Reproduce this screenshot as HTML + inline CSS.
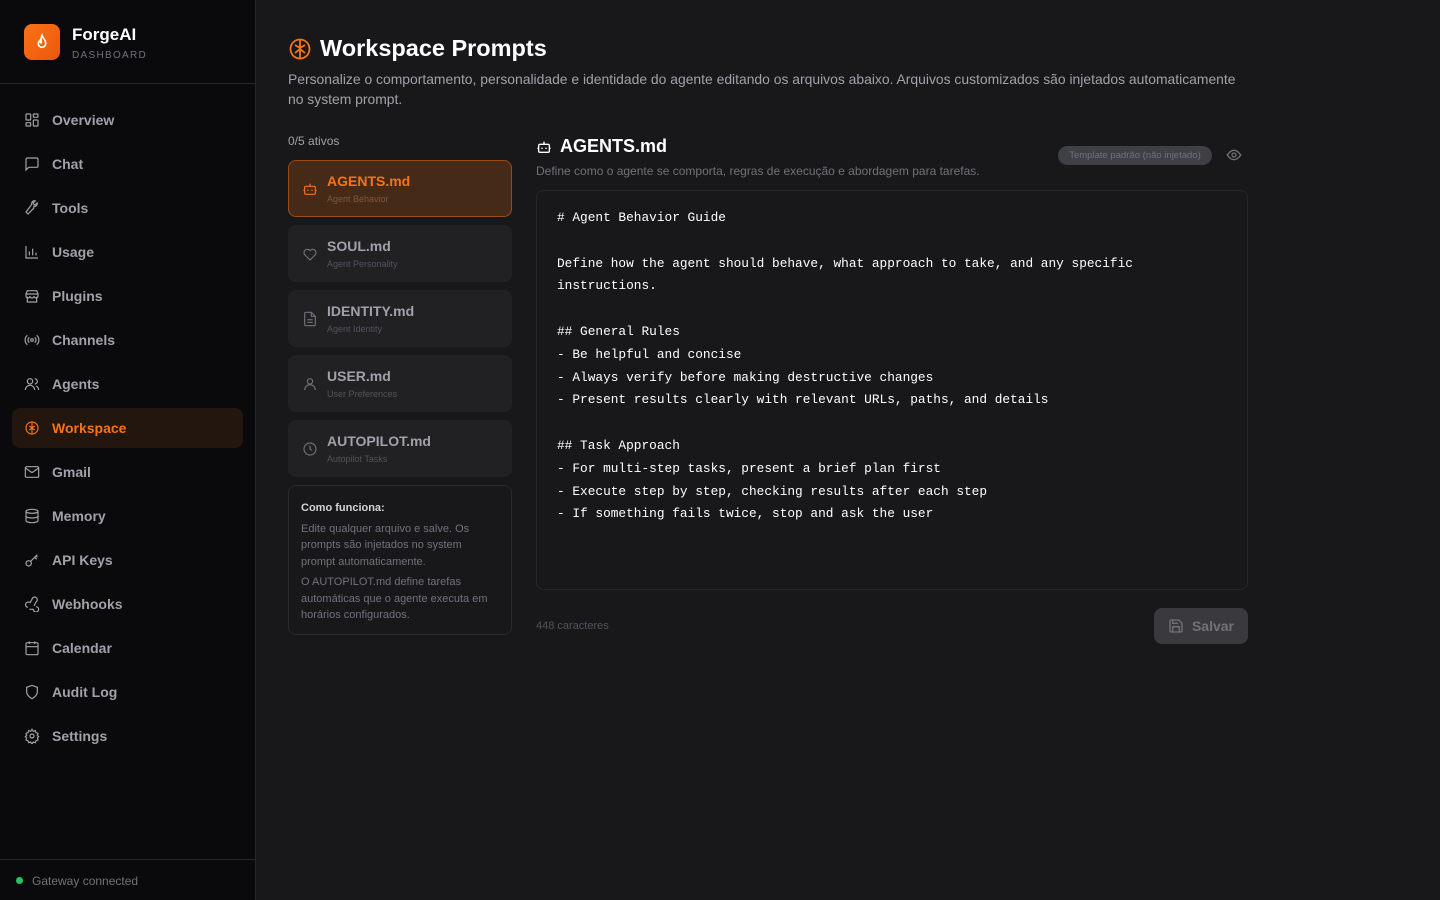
<!DOCTYPE html>
<html><head><meta charset="utf-8"><style>
*{box-sizing:border-box;margin:0;padding:0}
body{width:1440px;height:900px;background:#18181b;font-family:"Liberation Sans",sans-serif;color:#e4e4e7;position:relative;overflow:hidden}
.sb{position:absolute;left:0;top:0;width:256px;height:900px;background:#0a0a0c;border-right:1px solid #27272a}
.logo{position:absolute;left:24px;top:24px;width:36px;height:36px;border-radius:8px;background:linear-gradient(135deg,#f97316,#ea580c);display:flex;align-items:center;justify-content:center}
.brand{position:absolute;left:72px;top:25px;font-weight:bold;font-size:17px;color:#fff}
.sub{position:absolute;left:72px;top:50px;font-size:10px;letter-spacing:1.3px;color:#71717a}
.hr{position:absolute;left:0;top:83px;width:255px;border-top:1px solid #27272a}
.nav{position:absolute;left:12px;width:231px;height:40px;display:flex;align-items:center;padding-left:12px;font-size:14px;font-weight:bold;color:#a1a1aa;border-radius:8px}
.nav svg{width:16px;height:16px;margin-right:12px;stroke:#a1a1aa;fill:none;stroke-width:1.8}
.nav.act{background:#22160e;color:#f97316}
.nav.act svg{stroke:#f97316}
.foot{position:absolute;left:0;top:859px;width:255px;border-top:1px solid #27272a;height:41px;font-size:12px;color:#71717a;padding:14px 0 0 32px}
.foot:before{content:"";position:absolute;left:16px;top:17px;width:7px;height:7px;border-radius:50%;background:#22c55e}
h1{position:absolute;left:320px;top:35px;font-size:23.5px;color:#fff}
.desc{position:absolute;left:288px;top:69px;width:965px;font-size:13.9px;line-height:20px;color:#a1a1aa}
.cnt{position:absolute;left:288px;top:134px;font-size:12px;color:#a1a1aa}
.card{position:absolute;left:288px;width:224px;height:57px;border-radius:8px;background:#212124;border:1px solid #222225}
.card .t{position:absolute;left:38px;top:12px;font-size:14px;font-weight:bold;color:#a1a1aa}
.card .s{position:absolute;left:38px;top:33px;font-size:9px;color:#52525b}
.card svg{position:absolute;left:13px;top:20px;width:16px;height:16px;fill:none;stroke:#71717a;stroke-width:1.7}
.card.act{background:#452a18;border-color:#9a4a17}
.card.act .t{color:#f97316}.card.act svg{stroke:#f97316}.card.act .s{color:#7c5a40}
.info{position:absolute;left:288px;top:485px;width:224px;height:150px;border:1px solid #2a2a2d;border-radius:8px;padding:14px 12px;font-size:11px;color:#71717a;line-height:16.5px}
.info b{color:#d4d4d8;display:block;margin-bottom:4px}
.info p{margin-bottom:4px}
.ta{position:absolute;left:536px;top:190px;width:712px;height:400px;border:1px solid #27272a;border-radius:8px;padding:16px 20px;font-family:"Liberation Mono",monospace;font-size:12.8px;line-height:22.8px;color:#fff;white-space:pre}
.badge{position:absolute;left:1058px;top:146px;width:154px;height:19px;border-radius:10px;background:#3f3f46;font-size:9.5px;color:#71717a;text-align:center;line-height:19px}
.btn{position:absolute;left:1154px;top:608px;width:94px;height:36px;border-radius:8px;background:#3a3a3e;color:#71717a;font-size:14px;font-weight:bold;display:flex;align-items:center;justify-content:center;gap:8px}
</style></head><body>
<div class="sb">
<div class="logo"><svg width="18" height="18" viewBox="0 0 24 24" fill="none" stroke="#fff" stroke-width="2.2" stroke-linecap="round"><path d="M12 3c1 4 5 6 5 11a5 5 0 0 1-10 0c0-2 1-3 2-4 0 2 1 3 2 3 0-4-1-6 1-10z"/></svg></div>
<div class="brand">ForgeAI</div><div class="sub">DASHBOARD</div>
<div class="hr"></div>
<div class="nav" style="top:100px"><svg viewBox="0 0 24 24"><rect x="3" y="3" width="7" height="9" rx="1"/><rect x="14" y="3" width="7" height="5" rx="1"/><rect x="14" y="12" width="7" height="9" rx="1"/><rect x="3" y="16" width="7" height="5" rx="1"/></svg>Overview</div>
<div class="nav" style="top:144px"><svg viewBox="0 0 24 24"><path d="M21 15a2 2 0 0 1-2 2H7l-4 4V5a2 2 0 0 1 2-2h14a2 2 0 0 1 2 2z"/></svg>Chat</div>
<div class="nav" style="top:188px"><svg viewBox="0 0 24 24"><path d="M14.7 6.3a4 4 0 0 0 5-5l-3 3-2-1-1-2 3-3a4 4 0 0 0-5 5L3 15l3 3 8.7-8.7z" transform="translate(0,3)"/></svg>Tools</div>
<div class="nav" style="top:232px"><svg viewBox="0 0 24 24"><path d="M3 3v18h18M8 17v-6M13 17V7M18 17v-4"/></svg>Usage</div>
<div class="nav" style="top:276px"><svg viewBox="0 0 24 24"><path d="M3 9l2-5h14l2 5M3 9h18v3a3 3 0 0 1-6 0 3 3 0 0 1-6 0 3 3 0 0 1-6 0zM5 13v8h14v-8"/></svg>Plugins</div>
<div class="nav" style="top:320px"><svg viewBox="0 0 24 24"><circle cx="12" cy="12" r="2"/><path d="M16 8a5 5 0 0 1 0 8M8 16a5 5 0 0 1 0-8M19 5a9 9 0 0 1 0 14M5 19A9 9 0 0 1 5 5"/></svg>Channels</div>
<div class="nav" style="top:364px"><svg viewBox="0 0 24 24"><circle cx="9" cy="8" r="4"/><path d="M2 21a7 7 0 0 1 14 0M16 4a4 4 0 0 1 0 8M22 21a7 7 0 0 0-4-6"/></svg>Agents</div>
<div class="nav act" style="top:408px"><svg viewBox="0 0 24 24"><circle cx="12" cy="12" r="9"/><path d="M12 4v16M8 9l4 3 4-3M8 15l4-3 4 3"/></svg>Workspace</div>
<div class="nav" style="top:452px"><svg viewBox="0 0 24 24"><rect x="2" y="4" width="20" height="16" rx="2"/><path d="M2 6l10 7 10-7"/></svg>Gmail</div>
<div class="nav" style="top:496px"><svg viewBox="0 0 24 24"><ellipse cx="12" cy="5" rx="9" ry="3"/><path d="M3 5v14c0 1.7 4 3 9 3s9-1.3 9-3V5M3 12c0 1.7 4 3 9 3s9-1.3 9-3"/></svg>Memory</div>
<div class="nav" style="top:540px"><svg viewBox="0 0 24 24"><circle cx="7" cy="17" r="4"/><path d="M10 14l10-10M16 8l3 3M18 6l2 2"/></svg>API Keys</div>
<div class="nav" style="top:584px"><svg viewBox="0 0 24 24"><path d="M18 16a4 4 0 1 1-4 4H8M6 17a4 4 0 1 1 3-7l3-5M12 5a4 4 0 1 1 6 4l-3 6"/></svg>Webhooks</div>
<div class="nav" style="top:628px"><svg viewBox="0 0 24 24"><rect x="3" y="4" width="18" height="18" rx="2"/><path d="M16 2v4M8 2v4M3 10h18"/></svg>Calendar</div>
<div class="nav" style="top:672px"><svg viewBox="0 0 24 24"><path d="M12 22s8-4 8-10V5l-8-3-8 3v7c0 6 8 10 8 10z"/></svg>Audit Log</div>
<div class="nav" style="top:716px"><svg viewBox="0 0 24 24"><circle cx="12" cy="12" r="3"/><path d="M12 2l2 3 3-1 1 3 3 1-1 3 2 2-2 2 1 3-3 1-1 3-3-1-2 3-2-3-3 1-1-3-3-1 1-3-2-2 2-2-1-3 3-1 1-3 3 1z"/></svg>Settings</div>
<div class="foot">Gateway connected</div>
</div>

<svg style="position:absolute;left:288px;top:37px" width="24" height="24" viewBox="0 0 24 24" fill="none" stroke="#f97316" stroke-width="1.8"><circle cx="12" cy="12" r="9.5"/><path d="M12 3v18M7 8l5 3 5-3M7 16l5-4 5 4"/></svg>
<h1>Workspace Prompts</h1>
<div class="desc">Personalize o comportamento, personalidade e identidade do agente editando os arquivos abaixo. Arquivos customizados são injetados automaticamente no system prompt.</div>
<div class="cnt">0/5 ativos</div>

<div class="card act" style="top:160px"><svg viewBox="0 0 24 24"><rect x="4" y="8" width="16" height="12" rx="2"/><path d="M12 8V4M9 13v2M15 13v2M2 14h2M20 14h2"/></svg><div class="t">AGENTS.md</div><div class="s">Agent Behavior</div></div>
<div class="card" style="top:225px"><svg viewBox="0 0 24 24"><path d="M12 21l-8-8a5 5 0 0 1 8-6 5 5 0 0 1 8 6z"/></svg><div class="t">SOUL.md</div><div class="s">Agent Personality</div></div>
<div class="card" style="top:290px"><svg viewBox="0 0 24 24"><path d="M14 2H6a2 2 0 0 0-2 2v16a2 2 0 0 0 2 2h12a2 2 0 0 0 2-2V8zM14 2v6h6M8 13h8M8 17h8"/></svg><div class="t">IDENTITY.md</div><div class="s">Agent Identity</div></div>
<div class="card" style="top:355px"><svg viewBox="0 0 24 24"><circle cx="12" cy="8" r="4"/><path d="M4 21a8 8 0 0 1 16 0"/></svg><div class="t">USER.md</div><div class="s">User Preferences</div></div>
<div class="card" style="top:420px"><svg viewBox="0 0 24 24"><circle cx="12" cy="12" r="9"/><path d="M12 7v5l3 2"/></svg><div class="t">AUTOPILOT.md</div><div class="s">Autopilot Tasks</div></div>

<div class="info"><b>Como funciona:</b><p>Edite qualquer arquivo e salve. Os prompts são injetados no system prompt automaticamente.</p><p>O AUTOPILOT.md define tarefas automáticas que o agente executa em horários configurados.</p></div>

<svg style="position:absolute;left:536px;top:139px" width="16" height="16" viewBox="0 0 24 24" fill="none" stroke="#fff" stroke-width="2"><rect x="4" y="8" width="16" height="12" rx="2"/><path d="M12 8V4M9 13v2M15 13v2M2 14h2M20 14h2"/></svg>
<div style="position:absolute;left:560px;top:136px;font-size:18px;font-weight:bold;color:#fff">AGENTS.md</div>
<div style="position:absolute;left:536px;top:164px;font-size:12px;color:#71717a">Define como o agente se comporta, regras de execução e abordagem para tarefas.</div>
<div class="badge">Template padrão (não injetado)</div>
<svg style="position:absolute;left:1226px;top:147px" width="16" height="16" viewBox="0 0 24 24" fill="none" stroke="#71717a" stroke-width="2"><path d="M2 12s4-7 10-7 10 7 10 7-4 7-10 7S2 12 2 12z"/><circle cx="12" cy="12" r="3"/></svg>

<div class="ta"># Agent Behavior Guide

Define how the agent should behave, what approach to take, and any specific
instructions.

## General Rules
- Be helpful and concise
- Always verify before making destructive changes
- Present results clearly with relevant URLs, paths, and details

## Task Approach
- For multi-step tasks, present a brief plan first
- Execute step by step, checking results after each step
- If something fails twice, stop and ask the user</div>
<div style="position:absolute;left:536px;top:620px;font-size:11px;color:#52525b">448 caracteres</div>
<div class="btn"><svg width="16" height="16" viewBox="0 0 24 24" fill="none" stroke="#71717a" stroke-width="2"><path d="M19 21H5a2 2 0 0 1-2-2V5a2 2 0 0 1 2-2h11l5 5v11a2 2 0 0 1-2 2zM7 3v5h8M7 21v-8h10v8"/></svg>Salvar</div>
</body></html>
